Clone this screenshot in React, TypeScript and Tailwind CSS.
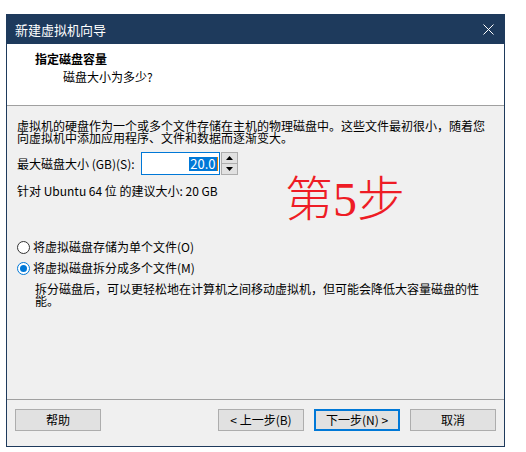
import React from "react";

const font = { fontFamily: '"Noto Sans CJK SC", "Noto Sans", sans-serif' };

function Radio({ checked, label }: { checked?: boolean; label: string }) {
  return (
    <div className="flex items-center h-[14px]">
      <div
        className={
          "w-[13px] h-[13px] rounded-full border bg-white flex items-center justify-center " +
          (checked ? "border-[#0078d7]" : "border-[#333333]")
        }
      >
        {checked && <div className="w-[7px] h-[7px] rounded-full bg-[#0078d7]" />}
      </div>
      <span className="ml-[3px] text-[12px] leading-[14px] text-black">{label}</span>
    </div>
  );
}

function Btn({ children, primary }: { children: React.ReactNode; primary?: boolean }) {
  return (
    <div
      className={
        "w-[86px] h-[22px] bg-[#e1e1e1] flex items-center justify-center text-[12px] text-black " +
        (primary ? "border-2 border-[#0078d7]" : "border border-[#adadad]")
      }
    >
      {children}
    </div>
  );
}

export default function App() {
  return (
    <div className="w-[526px] h-[452px] bg-white relative" style={font}>
      <div className="absolute left-[6px] top-[14px] w-[499px] h-[433px] border border-[#1e3a5c] flex flex-col bg-[#f0f0f0]">
        {/* title bar */}
        <div className="h-[30px] bg-[#1e3a5c] flex items-center justify-between pl-[8px] pr-[10px]">
          <span className="text-white text-[13px] leading-none">新建虚拟机向导</span>
          <svg width="11" height="11" viewBox="0 0 11 11">
            <path d="M0.5 0.5 L10.5 10.5 M10.5 0.5 L0.5 10.5" stroke="white" strokeWidth="1" />
          </svg>
        </div>
        {/* header */}
        <div className="h-[56px] bg-white border-b border-[#a0a0a0] pl-[28px] pt-[8px] box-content">
          <div className="text-[12px] leading-[14px] font-bold text-black">指定磁盘容量</div>
          <div className="text-[12px] leading-[14px] text-black ml-[28px] mt-[4px]">磁盘大小为多少?</div>
        </div>
        {/* body */}
        <div className="h-[304px] pl-[10px] pt-[14px] text-[12px] text-black relative">
          <div className="leading-[12px] w-[472px]">
            虚拟机的硬盘作为一个或多个文件存储在主机的物理磁盘中。这些文件最初很小，随着您向虚拟机中添加应用程序、文件和数据而逐渐变大。
          </div>
          <div className="flex items-center mt-[8px] h-[23px]">
            <span className="leading-none">最大磁盘大小 (GB)(S):</span>
            <div className="ml-[6px] w-[79px] h-[23px] border border-[#0078d7] bg-white flex items-center justify-end pr-[1px]">
              <span className="bg-[#0078d7] text-white text-[13px] leading-[14px] px-[1px]">20.0</span>
              <span className="w-[1px] h-[14px] bg-[#e07b00]" />
            </div>
            <div className="ml-[1px] w-[17px] h-[23px] border border-[#adadad] bg-[#e1e1e1] flex flex-col">
              <div className="flex-1 flex items-center justify-center border-b border-[#adadad]">
                <svg width="7" height="4" viewBox="0 0 7 4">
                  <path d="M3.5 0 L7 4 L0 4 Z" fill="black" />
                </svg>
              </div>
              <div className="flex-1 flex items-center justify-center">
                <svg width="7" height="4" viewBox="0 0 7 4">
                  <path d="M0 0 L7 0 L3.5 4 Z" fill="black" />
                </svg>
              </div>
            </div>
          </div>
          <div className="mt-[10px] leading-[12px]">针对 Ubuntu 64 位 的建议大小: 20 GB</div>
          <div className="mt-[43px]">
            <Radio label="将虚拟磁盘存储为单个文件(O)" />
          </div>
          <div className="mt-[7px]">
            <Radio checked label="将虚拟磁盘拆分成多个文件(M)" />
          </div>
          <div className="mt-[8px] ml-[18px] leading-[12px] w-[450px]">
            拆分磁盘后，可以更轻松地在计算机之间移动虚拟机，但可能会降低大容量磁盘的性能。
          </div>
          <div
            className="absolute left-[278px] top-[70px] text-[48px] leading-none text-[#ee1c25] font-light"
            style={{ fontFamily: '"Liberation Serif", "Noto Sans CJK SC", serif' }}
          >
            第5步
          </div>
        </div>
        {/* footer */}
        <div className="h-[39px] border-t border-[#a0a0a0] box-content flex items-start pt-[9px] px-[8px]">
          <Btn>帮助</Btn>
          <div className="flex-1" />
          <Btn>&lt; 上一步(B)</Btn>
          <div className="w-[10px]" />
          <Btn primary>下一步(N) &gt;</Btn>
          <div className="w-[10px]" />
          <Btn>取消</Btn>
        </div>
      </div>
    </div>
  );
}
